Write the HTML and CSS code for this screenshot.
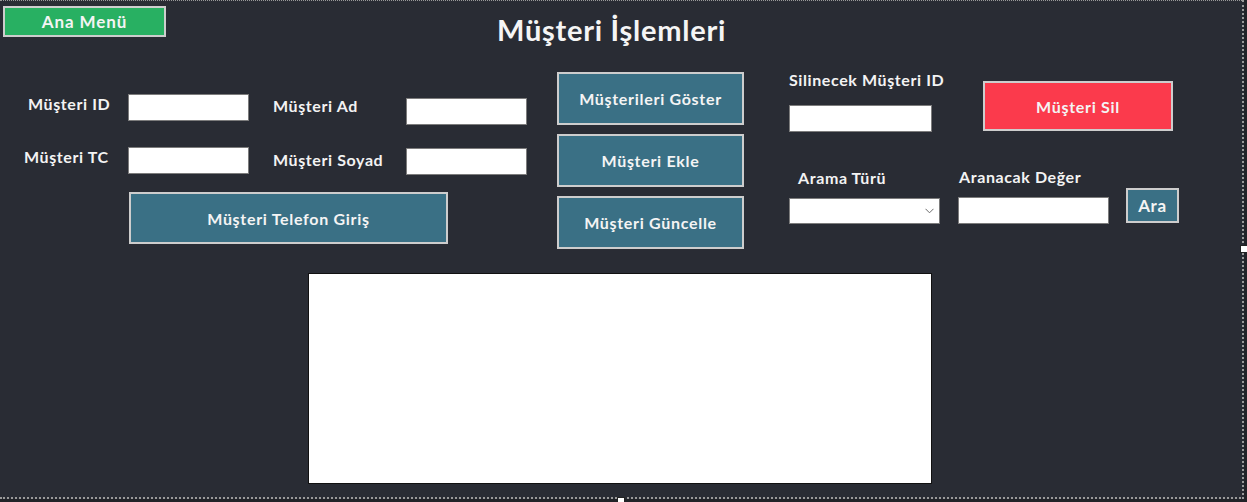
FILE: index.html
```html
<!DOCTYPE html>
<html lang="tr">
<head>
<meta charset="utf-8">
<title>Müşteri İşlemleri</title>
<link rel="stylesheet" href="styles.css">
</head>
<body>
<div class="form">
  <div class="top">
    <button class="btn btn-menu">Ana Menü</button>
    <h1 class="title">Müşteri İşlemleri</h1>
  </div>
  <div class="main">
    <div class="col-a">
      <div class="fields">
        <label class="lbl lbl-id">Müşteri ID</label>
        <input class="inp" type="text">
        <label class="lbl lbl2 lbl-ad">Müşteri Ad</label>
        <input class="inp inp-ad" type="text">
        <label class="lbl lbl-tc">Müşteri TC</label>
        <input class="inp" type="text">
        <label class="lbl lbl2 lbl-soyad">Müşteri Soyad</label>
        <input class="inp inp-soyad" type="text">
      </div>
      <button class="btn btn-teal btn-phone">Müşteri Telefon Giriş</button>
    </div>
    <div class="col-b">
      <button class="btn btn-teal btn-side">Müşterileri Göster</button>
      <button class="btn btn-teal btn-side">Müşteri Ekle</button>
      <button class="btn btn-teal btn-side">Müşteri Güncelle</button>
    </div>
    <div class="col-c">
      <div class="delete-row">
        <div class="delete-field">
          <label class="lbl">Silinecek Müşteri ID</label>
          <input class="inp inp-del" type="text">
        </div>
        <button class="btn btn-red">Müşteri Sil</button>
      </div>
      <div class="search-row">
        <div class="search-field">
          <label class="lbl lbl-type">Arama Türü</label>
          <div class="select">
            <svg class="chev" width="9" height="6" viewBox="0 0 9 6"><path d="M0.5 0.8 L4.5 4.8 L8.5 0.8" fill="none" stroke="#6b6b6b" stroke-width="1"/></svg>
          </div>
        </div>
        <div class="search-field field-value">
          <label class="lbl lbl-value">Aranacak Değer</label>
          <input class="inp inp-search" type="text">
        </div>
        <button class="btn btn-teal btn-ara">Ara</button>
      </div>
    </div>
  </div>
  <div class="results"></div>
  <span class="handle handle-right"></span>
  <span class="handle handle-bottom"></span>
</div>
</body>
</html>
```

FILE: styles.css
```css
html, body {
  margin: 0;
  padding: 0;
}
body {
  width: 1247px;
  height: 502px;
  overflow: hidden;
  background: #212328;
  font-family: "Lato", "DejaVu Sans", sans-serif;
  color: #f3f3f3;
}
.form {
  position: relative;
  box-sizing: border-box;
  width: 1244px;
  height: 499px;
  background: #292c34;
  border-top: 1px dotted #9a9a9a;
  border-right: 2px dotted #9a9a9a;
  border-bottom: 2px dotted #9a9a9a;
}
.top {
  display: flex;
  align-items: flex-start;
  padding: 5px 0 0 3px;
}
.btn {
  box-sizing: border-box;
  font-family: "Lato", "DejaVu Sans", sans-serif;
  font-weight: 700;
  font-size: 16px;
  color: #f4f4f4;
  border: 2px solid #cdcdcd;
  padding: 0;
  margin: 0;
  letter-spacing: 0.7px;
}
.btn-menu {
  width: 163px;
  height: 31px;
  background: #28b062;
  font-size: 17px;
  letter-spacing: 0.9px;
}
.title {
  margin: 6px 0 0 331px;
  font-size: 29px;
  font-weight: 700;
  line-height: 35px;
  color: #f5f5f5;
  letter-spacing: 0.75px;
}
.main {
  display: flex;
  align-items: flex-start;
  margin-top: 22px;
}
.col-a {
  margin-left: 24px;
  padding-top: 25px;
  display: flex;
  flex-direction: column;
}
.fields {
  display: grid;
  grid-template-columns: 104px 121px 157px 121px;
  grid-auto-rows: 27px;
  row-gap: 26px;
}
.lbl {
  display: block;
  font-size: 16px;
  font-weight: 700;
  line-height: 20px;
  color: #f3f3f3;
  white-space: nowrap;
  letter-spacing: 0.6px;
}
.lbl-id { margin-left: 4px; }
.lbl2 { padding-left: 24px; }
.lbl-ad { margin-top: 2px; }
.lbl-soyad { margin-top: 3px; }
.inp {
  box-sizing: border-box;
  width: 121px;
  height: 27px;
  margin: 0;
  background: #ffffff;
  border: 1px solid #7c7c7c;
  outline: none;
}
.inp-ad { margin-top: 4px; }
.inp-soyad { margin-top: 1px; }
.btn-teal {
  background: #3a7085;
}
.btn-phone {
  width: 319px;
  height: 52px;
  margin: 18px 0 0 105px;
}
.col-b {
  margin: 3px 0 0 30px;
  display: flex;
  flex-direction: column;
  gap: 9px;
}
.btn-side {
  width: 187px;
  height: 53px;
}
.col-c {
  margin: 1px 0 0 45px;
  display: flex;
  flex-direction: column;
}
.delete-row {
  display: flex;
  align-items: flex-start;
}
.delete-field {
  display: flex;
  flex-direction: column;
  gap: 15px;
  width: 143px;
}
.inp-del {
  width: 143px;
}
.btn-red {
  margin: 11px 0 0 51px;
  width: 190px;
  height: 50px;
  background: #fb3a4c;
}
.search-row {
  margin-top: 35px;
  display: flex;
  align-items: flex-end;
}
.search-field {
  display: flex;
  flex-direction: column;
  gap: 10px;
}
.lbl-type { margin-left: 9px; }
.lbl-value { margin-left: 1px; }
.field-value { margin-left: 18px; }
.select {
  box-sizing: border-box;
  width: 151px;
  height: 26px;
  background: #ffffff;
  border: 1px solid #7c7c7c;
  display: flex;
  align-items: center;
  justify-content: flex-end;
  padding-right: 5px;
}
.inp-search {
  width: 151px;
}
.btn-ara {
  margin: 0 0 1px 17px;
  width: 53px;
  height: 35px;
  font-size: 17px;
}
.results {
  box-sizing: border-box;
  margin: 24px 0 0 308px;
  width: 624px;
  height: 211px;
  background: #ffffff;
  border: 1px solid #111111;
}
.handle {
  position: absolute;
  width: 6px;
  height: 6px;
  background: #ffffff;
  border: 1px solid #222;
}
.handle-right {
  right: -6px;
  top: 244px;
}
.handle-bottom {
  left: 617px;
  bottom: -8px;
}
```
